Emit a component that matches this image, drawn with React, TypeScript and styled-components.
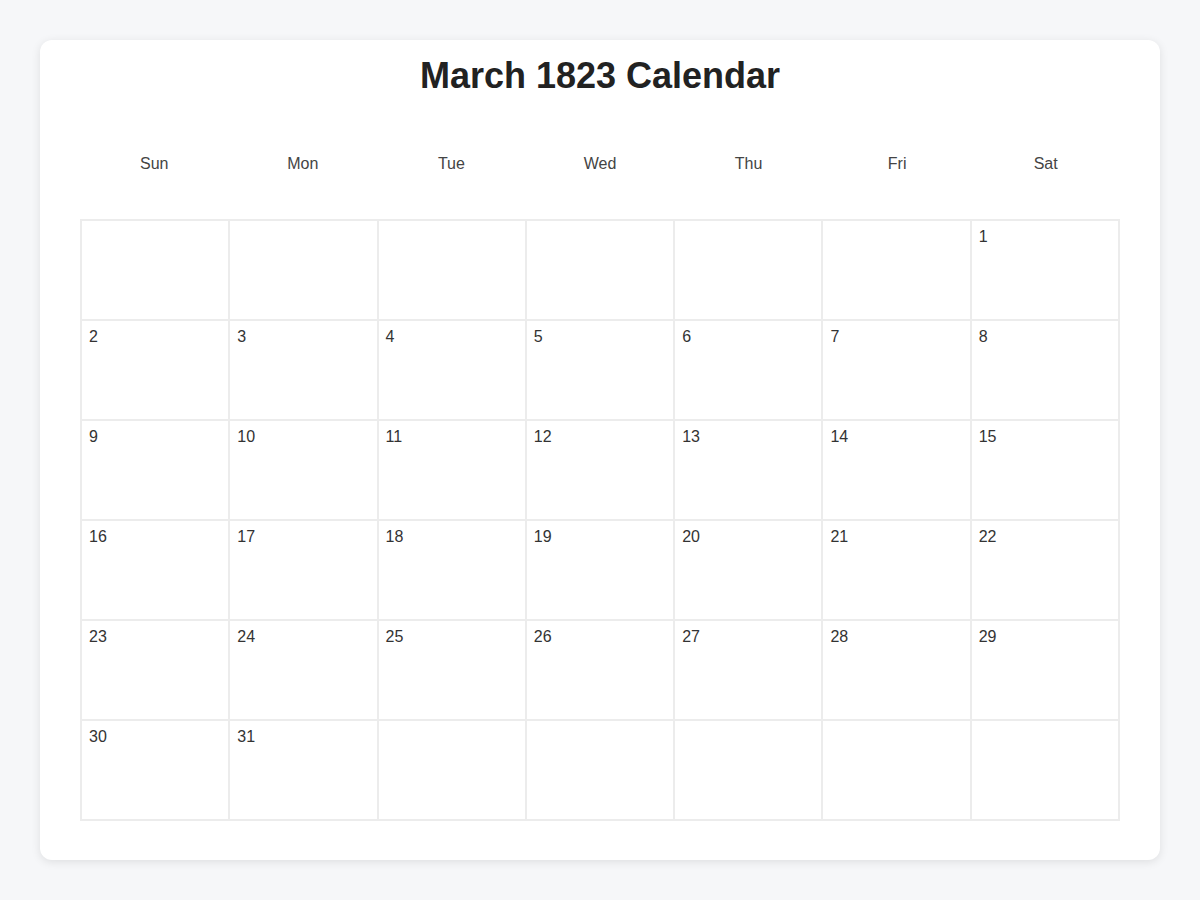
import React from 'react';
import styled, { createGlobalStyle } from 'styled-components';

const DAYS = ['Sun', 'Mon', 'Tue', 'Wed', 'Thu', 'Fri', 'Sat'];

// March 1823 starts on a Saturday
const buildCells = (): (number | null)[] => {
  const cells: (number | null)[] = [];
  for (let i = 0; i < 6; i++) cells.push(null);
  for (let d = 1; d <= 31; d++) cells.push(d);
  while (cells.length < 42) cells.push(null);
  return cells;
};

const App: React.FC = () => {
  const cells = buildCells();
  return (
    <>
      <GlobalStyle />
      <Page>
        <Card>
          <Title>March 1823 Calendar</Title>
          <WeekHeader>
            {DAYS.map((d) => (
              <DayName key={d}>{d}</DayName>
            ))}
          </WeekHeader>
          <Grid>
            {cells.map((c, i) => (
              <Cell key={i}>{c ?? ''}</Cell>
            ))}
          </Grid>
        </Card>
      </Page>
    </>
  );
};

export default App;

const GlobalStyle = createGlobalStyle`
  body {
    margin: 0;
    background: #f6f7f9;
    font-family: "Liberation Sans", Arial, sans-serif;
  }
`;

const Page = styled.div`
  padding: 40px;
`;

const Card = styled.div`
  background: #fff;
  border-radius: 12px;
  box-shadow: 0 2px 10px rgba(0, 0, 0, 0.1);
  padding: 15px 40px 40px;
  height: 820px;
  box-sizing: border-box;
`;

const Title = styled.h1`
  margin: 0;
  text-align: center;
  font-size: 36px;
  font-weight: bold;
  color: #222;
`;

const WeekHeader = styled.div`
  display: grid;
  grid-template-columns: repeat(7, 1fr);
  margin-top: 58px;
  margin-bottom: 46px;
`;

const DayName = styled.div`
  text-align: center;
  font-size: 16px;
  color: #444;
`;

const Grid = styled.div`
  display: grid;
  grid-template-columns: repeat(7, 1fr);
  grid-auto-rows: 100px;
  border: 1px solid #ececec;
`;

const Cell = styled.div`
  border: 1px solid #ececec;
  box-sizing: border-box;
  padding: 7px 7px;
  font-size: 16px;
  color: #333;
`;
